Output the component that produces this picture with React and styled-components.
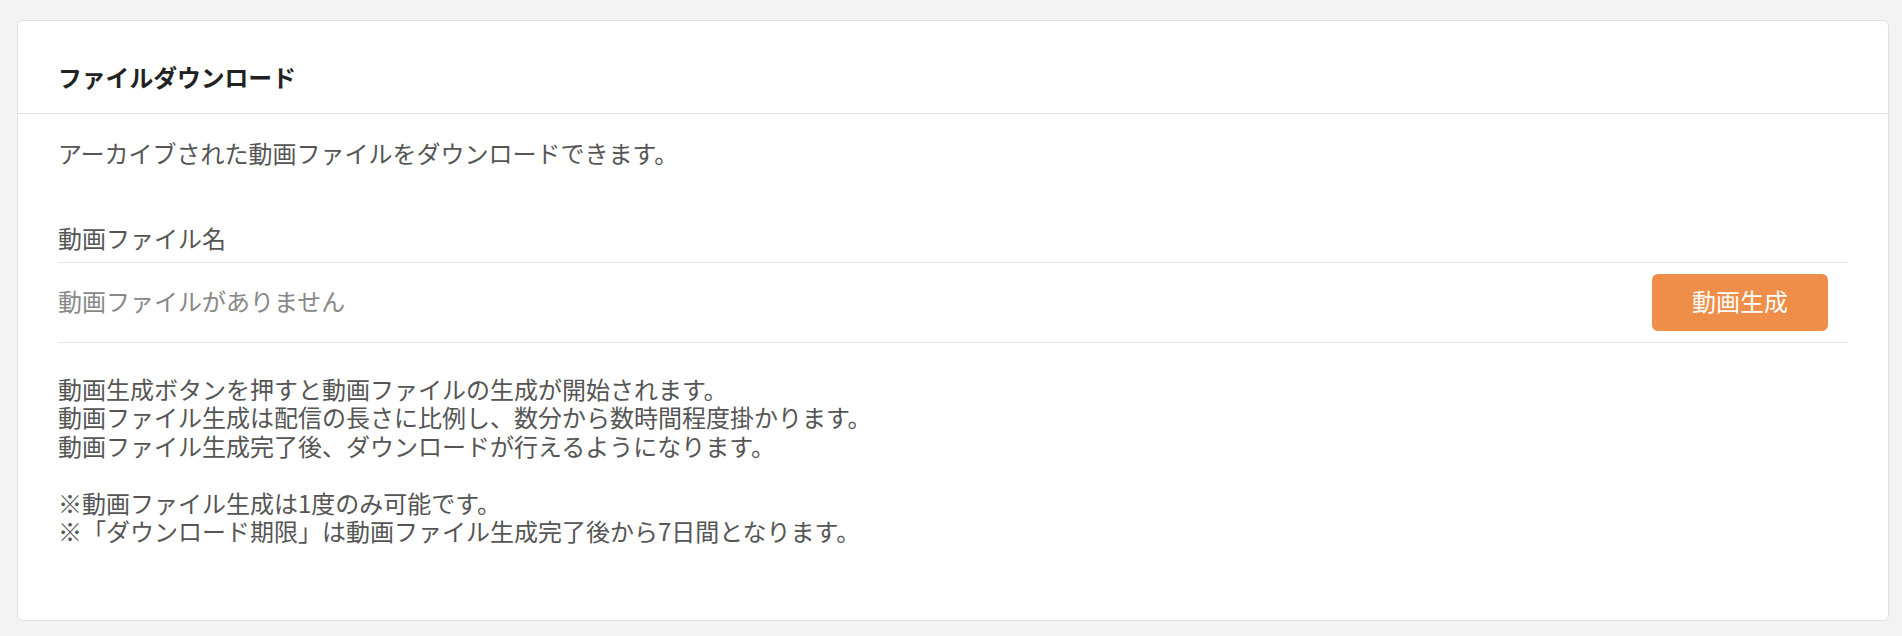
import React from "react";
import styled, { createGlobalStyle } from "styled-components";

const GlobalStyle = createGlobalStyle`
  html, body {
    margin: 0;
    padding: 0;
    background: #f3f3f3;
  }
  body {
    font-family: "Noto Sans CJK JP", "Noto Sans", sans-serif;
  }
`;

const Page = styled.div`
  display: flex;
  flex-direction: column;
  box-sizing: border-box;
  min-height: 100vh;
  padding: 20px 13px 15px 17px;
`;

const Card = styled.section`
  flex: 1;
  background: #fff;
  border: 1px solid #e0e0e0;
  border-radius: 6px;
`;

const CardHeader = styled.header`
  padding: 42px 40px 22px;
  border-bottom: 1px solid #e0e0e0;
`;

const Title = styled.h2`
  margin: 0;
  font-size: 23.8px;
  line-height: 28px;
  font-weight: 700;
  color: #222;
`;

const CardBody = styled.div`
  padding: 25px 40px 60px;
`;

const Text = styled.p`
  margin: ${({ margin = "0" }) => margin};
  font-size: 24px;
  line-height: 28.5px;
  color: ${({ color = "#555" }) => color};
  white-space: pre-line;
`;

const FieldLabel = styled.div`
  margin-top: 56px;
  padding-bottom: 10px;
  border-bottom: 1px solid #e6e6e6;
  font-size: 24px;
  line-height: 28px;
  color: #555;
`;

const FileRow = styled.div`
  display: flex;
  align-items: center;
  justify-content: space-between;
  height: 79px;
  border-bottom: 1px solid #e6e6e6;
`;

const Button = styled.button`
  width: 176px;
  height: 57px;
  margin-right: 20px;
  border: none;
  border-radius: 6px;
  background: #ef8e48;
  color: #fff;
  font-family: inherit;
  font-size: 24px;
  line-height: 28px;
  padding: 0 0 2px;
  cursor: pointer;
`;

export default function App() {
  return (
    <>
      <GlobalStyle />
      <Page>
        <Card>
          <CardHeader>
            <Title>ファイルダウンロード</Title>
          </CardHeader>
          <CardBody>
            <Text>アーカイブされた動画ファイルをダウンロードできます。</Text>
            <FieldLabel>動画ファイル名</FieldLabel>
            <FileRow>
              <Text color="#888" margin="0 0 2px">
                動画ファイルがありません
              </Text>
              <Button>動画生成</Button>
            </FileRow>
            <Text margin="32px 0 0">
              {`動画生成ボタンを押すと動画ファイルの生成が開始されます。
動画ファイル生成は配信の長さに比例し、数分から数時間程度掛かります。
動画ファイル生成完了後、ダウンロードが行えるようになります。

※動画ファイル生成は1度のみ可能です。
※「ダウンロード期限」は動画ファイル生成完了後から7日間となります。`}
            </Text>
          </CardBody>
        </Card>
      </Page>
    </>
  );
}
